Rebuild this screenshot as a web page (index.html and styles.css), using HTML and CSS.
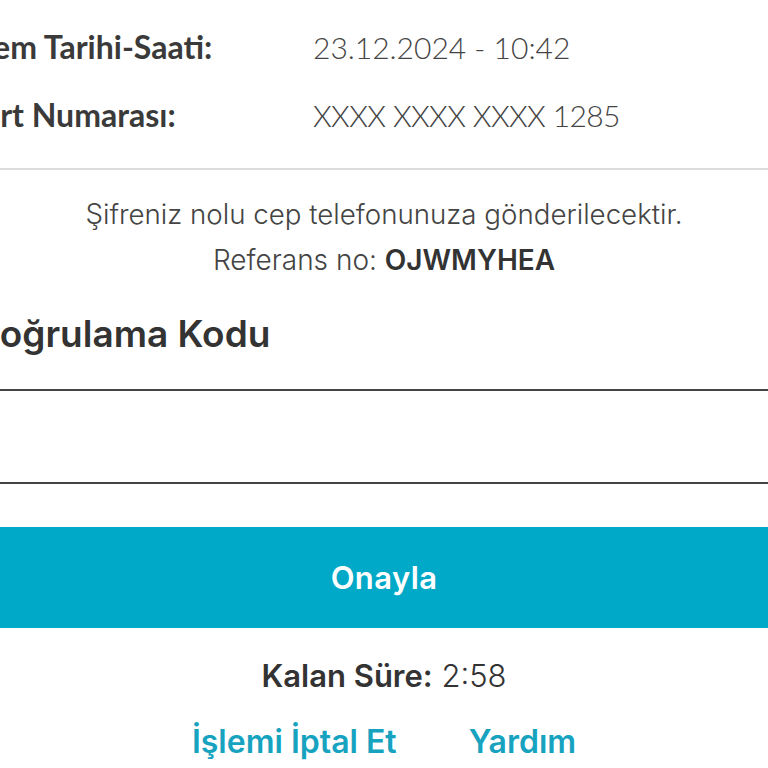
FILE: index.html
```html
<!DOCTYPE html>
<html lang="tr">
<head>
<meta charset="utf-8">
<link rel="stylesheet" href="styles.css">
</head>
<body>
<div class="page">
  <div class="details">
    <div class="row"><span class="label">İşlem Tarihi-Saati:</span><span class="value">23.12.2024 - 10:42</span></div>
    <div class="row"><span class="label">Kart Numarası:</span><span class="value card-no">XXXX XXXX XXXX 1285</span></div>
  </div>
  <div class="divider"></div>
  <p class="info">Şifreniz nolu cep telefonunuza gönderilecektir.</p>
  <p class="ref">Referans no: <strong>OJWMYHEA</strong></p>
  <div class="code-label">Doğrulama Kodu</div>
  <div class="code-input"></div>
  <div class="confirm">Onayla</div>
  <p class="timer"><strong>Kalan Süre:</strong> 2:58</p>
  <div class="links"><span class="link">İşlemi İptal Et</span><span class="link">Yardım</span></div>
</div>
</body>
</html>
```
FILE: styles.css
```css
html, body {
  margin: 0;
  padding: 0;
  background: #ffffff;
  overflow: hidden;
}
body {
  font-family: Inter, Lato, "Liberation Sans", sans-serif;
  color: #3a3a3a;
  width: 768px;
  height: 768px;
}
.page {
  display: flex;
  flex-direction: column;
}
.details {
  display: flex;
  flex-direction: column;
  gap: 28px;
  padding-top: 27px;
  padding-bottom: 33px;
  margin-left: -38px;
  font-family: Lato, Inter, "Liberation Sans", sans-serif;
}
.row {
  display: grid;
  grid-template-columns: 351px 1fr;
  align-items: baseline;
}
.label {
  font-size: 32px;
  font-weight: 700;
  line-height: 40px;
  color: #3a3a3a;
}
.value {
  font-size: 30px;
  font-weight: 300;
  line-height: 40px;
  color: #444;
}
.card-no {
  letter-spacing: -0.6px;
}
.divider {
  height: 2px;
  background: #dcdcdc;
}
.info {
  margin: 27px 0 0;
  text-align: center;
  font-size: 27.7px;
  font-weight: 300;
  line-height: 34px;
  color: #444;
}
.ref {
  margin: 12px 0 0;
  text-align: center;
  font-size: 28px;
  font-weight: 300;
  line-height: 34px;
  color: #444;
}
.ref strong {
  font-weight: 600;
  color: #333;
}
.code-label {
  margin: 37px 0 0 -27px;
  font-size: 37px;
  font-weight: 600;
  line-height: 40px;
  color: #333;
}
.code-input {
  margin-top: 35px;
  height: 91px;
  border-top: 2px solid #444;
  border-bottom: 2px solid #444;
}
.confirm {
  margin-top: 43px;
  height: 101px;
  background: #00a9c8;
  color: #ffffff;
  font-size: 31px;
  font-weight: 600;
  letter-spacing: 0.4px;
  display: flex;
  align-items: center;
  justify-content: center;
}
.timer {
  margin: 30px 0 0;
  text-align: center;
  font-size: 31px;
  font-weight: 300;
  line-height: 36px;
  color: #333;
}
.timer strong {
  font-weight: 600;
}
.links {
  margin-top: 30px;
  display: flex;
  justify-content: center;
  gap: 72px;
}
.link {
  font-size: 32px;
  font-weight: 600;
  line-height: 36px;
  color: #17a3c0;
}
```
